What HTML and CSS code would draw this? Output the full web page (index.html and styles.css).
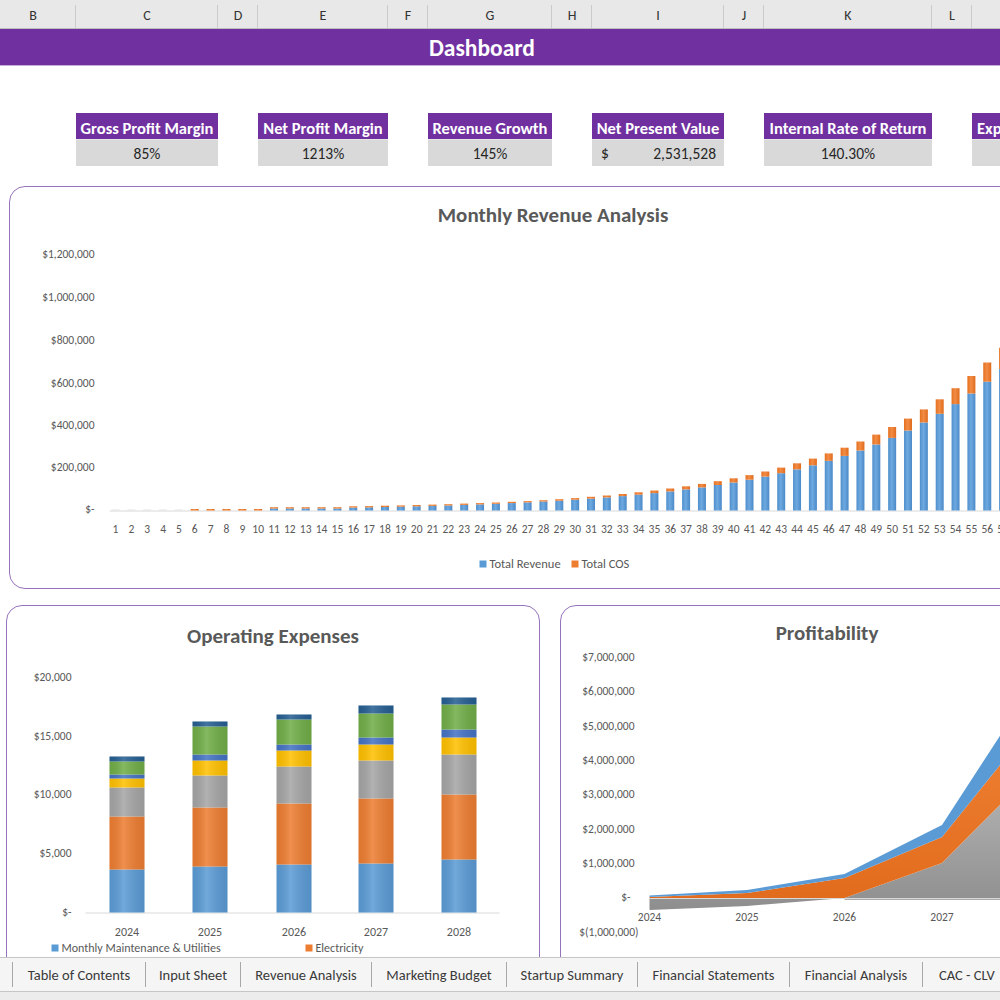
FILE: index.html
```html
<!DOCTYPE html>
<html>
<head>
<meta charset="utf-8">
<title>Dashboard</title>
<link rel="stylesheet" href="styles.css">
</head>
<body>
<div class="colhead">
  <span>B</span><span>C</span><span>D</span><span>E</span><span>F</span><span>G</span><span>H</span><span>I</span><span>J</span><span>K</span><span>L</span><span></span>
</div>
<div class="titlebar"><h1>Dashboard</h1></div>

<div class="kpis">
  <div class="kpi k1"><div class="kpi-h">Gross Profit Margin</div><div class="kpi-v">85%</div></div>
  <div class="kpi k2"><div class="kpi-h">Net Profit Margin</div><div class="kpi-v">1213%</div></div>
  <div class="kpi k3"><div class="kpi-h">Revenue Growth</div><div class="kpi-v">145%</div></div>
  <div class="kpi k4"><div class="kpi-h">Net Present Value</div><div class="kpi-v split"><span>$</span><span>2,531,528</span></div></div>
  <div class="kpi k5"><div class="kpi-h">Internal Rate of Return</div><div class="kpi-v">140.30%</div></div>
  <div class="kpi k6"><div class="kpi-h left">Exp</div><div class="kpi-v"></div></div>
</div>

<section class="card card-wide">
  <h2 class="chart-title t-rev">Monthly Revenue Analysis</h2>
  <svg class="chart" width="1097" height="348" viewBox="10.5 239.5 1097 348">
    <defs>
      <linearGradient id="gb" x1="0" y1="0" x2="1" y2="0">
        <stop offset="0" stop-color="#4f8fcc"/><stop offset="0.45" stop-color="#6ea9e0"/><stop offset="1" stop-color="#4a89c8"/>
      </linearGradient>
      <linearGradient id="go" x1="0" y1="0" x2="1" y2="0">
        <stop offset="0" stop-color="#e4701f"/><stop offset="0.45" stop-color="#f28c45"/><stop offset="1" stop-color="#e06b1c"/>
      </linearGradient>
    </defs>
    <g class="ylab" text-anchor="end">
      <text x="95" y="258">$1,200,000</text>
      <text x="95" y="301">$1,000,000</text>
      <text x="95" y="344">$800,000</text>
      <text x="95" y="387">$600,000</text>
      <text x="95" y="429">$400,000</text>
      <text x="95" y="471">$200,000</text>
      <text x="95" y="513">$-</text>
    </g>
    <line x1="110" y1="511.5" x2="1110" y2="511.5" stroke="#d9d9d9" stroke-width="1"/>
    <g fill="#e4e4e4">
      <rect x="112" y="510" width="8" height="1"/><rect x="127.85" y="510" width="8" height="1"/><rect x="143.7" y="510" width="8" height="1"/><rect x="159.55" y="510" width="8" height="1"/><rect x="175.4" y="510" width="8" height="1"/>
    </g>
    <g fill="url(#gb)">
      <rect x="270.5" y="509" width="8" height="2"/>
      <rect x="286.35" y="509" width="8" height="2"/>
      <rect x="302.2" y="509" width="8" height="2"/>
      <rect x="318.05" y="509" width="8" height="2"/>
      <rect x="333.9" y="509" width="8" height="2"/>
      <rect x="349.75" y="508.1" width="8" height="2.9"/>
      <rect x="365.6" y="507.9" width="8" height="3.1"/>
      <rect x="381.45" y="507.5" width="8" height="3.5"/>
      <rect x="397.3" y="507.2" width="8" height="3.8"/>
      <rect x="413.15" y="506.8" width="8" height="4.2"/>
      <rect x="429" y="506.4" width="8" height="4.6"/>
      <rect x="444.85" y="506" width="8" height="5"/>
      <rect x="460.7" y="505.4" width="8" height="5.6"/>
      <rect x="476.55" y="504.9" width="8" height="6.1"/>
      <rect x="492.4" y="504.3" width="8" height="6.7"/>
      <rect x="508.25" y="503.6" width="8" height="7.4"/>
      <rect x="524.1" y="502.9" width="8" height="8.1"/>
      <rect x="539.95" y="502" width="8" height="9"/>
      <rect x="555.8" y="501.2" width="8" height="9.8"/>
      <rect x="571.65" y="500.2" width="8" height="10.8"/>
      <rect x="587.5" y="499.1" width="8" height="11.9"/>
      <rect x="603.35" y="497.9" width="8" height="13.1"/>
      <rect x="619.2" y="496.6" width="8" height="14.4"/>
      <rect x="635.05" y="495.2" width="8" height="15.8"/>
      <rect x="650.9" y="493.6" width="8" height="17.4"/>
      <rect x="666.75" y="491.9" width="8" height="19.1"/>
      <rect x="682.6" y="489.9" width="8" height="21.1"/>
      <rect x="698.45" y="487.9" width="8" height="23.1"/>
      <rect x="714.3" y="485.5" width="8" height="25.5"/>
      <rect x="730.15" y="483" width="8" height="28"/>
      <rect x="746" y="480.2" width="8" height="30.8"/>
      <rect x="761.85" y="477.1" width="8" height="33.9"/>
      <rect x="777.7" y="473.7" width="8" height="37.3"/>
      <rect x="793.55" y="469.9" width="8" height="41.1"/>
      <rect x="809.4" y="465.8" width="8" height="45.2"/>
      <rect x="825.25" y="461.3" width="8" height="49.7"/>
      <rect x="841.1" y="456.4" width="8" height="54.6"/>
      <rect x="856.95" y="451" width="8" height="60"/>
      <rect x="872.8" y="445" width="8" height="66"/>
      <rect x="888.65" y="438.4" width="8" height="72.6"/>
      <rect x="904.5" y="431" width="8" height="80"/>
      <rect x="920.35" y="423" width="8" height="88"/>
      <rect x="936.2" y="414.3" width="8" height="96.7"/>
      <rect x="952.05" y="404.6" width="8" height="106.4"/>
      <rect x="967.9" y="394" width="8" height="117"/>
      <rect x="983.75" y="382.2" width="8" height="128.8"/>
      <rect x="999.6" y="369.4" width="8" height="141.6"/>
    </g>
    <g fill="url(#go)">
      <rect x="191.25" y="509.5" width="8" height="1.5"/>
      <rect x="207.1" y="509.5" width="8" height="1.5"/>
      <rect x="222.95" y="509.5" width="8" height="1.5"/>
      <rect x="238.8" y="509.5" width="8" height="1.5"/>
      <rect x="254.65" y="509.5" width="8" height="1.5"/>
      <rect x="270.5" y="507.7" width="8" height="1.3"/>
      <rect x="286.35" y="507.7" width="8" height="1.3"/>
      <rect x="302.2" y="507.7" width="8" height="1.3"/>
      <rect x="318.05" y="507.7" width="8" height="1.3"/>
      <rect x="333.9" y="507.7" width="8" height="1.3"/>
      <rect x="349.75" y="506.8" width="8" height="1.3"/>
      <rect x="365.6" y="506.6" width="8" height="1.3"/>
      <rect x="381.45" y="506.2" width="8" height="1.3"/>
      <rect x="397.3" y="505.9" width="8" height="1.3"/>
      <rect x="413.15" y="505.5" width="8" height="1.3"/>
      <rect x="429" y="505.1" width="8" height="1.3"/>
      <rect x="444.85" y="504.7" width="8" height="1.3"/>
      <rect x="460.7" y="504.1" width="8" height="1.3"/>
      <rect x="476.55" y="503.6" width="8" height="1.3"/>
      <rect x="492.4" y="503" width="8" height="1.3"/>
      <rect x="508.25" y="502.3" width="8" height="1.3"/>
      <rect x="524.1" y="501.6" width="8" height="1.3"/>
      <rect x="539.95" y="500.7" width="8" height="1.3"/>
      <rect x="555.8" y="499.7" width="8" height="1.5"/>
      <rect x="571.65" y="498.6" width="8" height="1.6"/>
      <rect x="587.5" y="497.3" width="8" height="1.8"/>
      <rect x="603.35" y="496" width="8" height="1.9"/>
      <rect x="619.2" y="494.5" width="8" height="2.1"/>
      <rect x="635.05" y="492.8" width="8" height="2.4"/>
      <rect x="650.9" y="491" width="8" height="2.6"/>
      <rect x="666.75" y="489" width="8" height="2.9"/>
      <rect x="682.6" y="486.8" width="8" height="3.1"/>
      <rect x="698.45" y="484.4" width="8" height="3.5"/>
      <rect x="714.3" y="481.7" width="8" height="3.8"/>
      <rect x="730.15" y="478.8" width="8" height="4.2"/>
      <rect x="746" y="475.6" width="8" height="4.6"/>
      <rect x="761.85" y="472" width="8" height="5.1"/>
      <rect x="777.7" y="468.1" width="8" height="5.6"/>
      <rect x="793.55" y="463.8" width="8" height="6.1"/>
      <rect x="809.4" y="459.1" width="8" height="6.7"/>
      <rect x="825.25" y="453.9" width="8" height="7.4"/>
      <rect x="841.1" y="448.2" width="8" height="8.2"/>
      <rect x="856.95" y="442" width="8" height="9"/>
      <rect x="872.8" y="435.1" width="8" height="9.9"/>
      <rect x="888.65" y="427.5" width="8" height="10.9"/>
      <rect x="904.5" y="419.1" width="8" height="11.9"/>
      <rect x="920.35" y="409.9" width="8" height="13.1"/>
      <rect x="936.2" y="399.8" width="8" height="14.5"/>
      <rect x="952.05" y="388.7" width="8" height="15.9"/>
      <rect x="967.9" y="376.5" width="8" height="17.5"/>
      <rect x="983.75" y="363" width="8" height="19.2"/>
      <rect x="999.6" y="348.2" width="8" height="21.2"/>
    </g>
    <g class="xlab" text-anchor="middle">
      <text x="116" y="533">1</text><text x="131.85" y="533">2</text><text x="147.7" y="533">3</text><text x="163.55" y="533">4</text><text x="179.4" y="533">5</text><text x="195.25" y="533">6</text><text x="211.1" y="533">7</text><text x="226.95" y="533">8</text><text x="242.8" y="533">9</text><text x="258.65" y="533">10</text>
      <text x="274.5" y="533">11</text><text x="290.35" y="533">12</text><text x="306.2" y="533">13</text><text x="322.05" y="533">14</text><text x="337.9" y="533">15</text><text x="353.75" y="533">16</text><text x="369.6" y="533">17</text><text x="385.45" y="533">18</text><text x="401.3" y="533">19</text><text x="417.15" y="533">20</text>
      <text x="433" y="533">21</text><text x="448.85" y="533">22</text><text x="464.7" y="533">23</text><text x="480.55" y="533">24</text><text x="496.4" y="533">25</text><text x="512.25" y="533">26</text><text x="528.1" y="533">27</text><text x="543.95" y="533">28</text><text x="559.8" y="533">29</text><text x="575.65" y="533">30</text>
      <text x="591.5" y="533">31</text><text x="607.35" y="533">32</text><text x="623.2" y="533">33</text><text x="639.05" y="533">34</text><text x="654.9" y="533">35</text><text x="670.75" y="533">36</text><text x="686.6" y="533">37</text><text x="702.45" y="533">38</text><text x="718.3" y="533">39</text><text x="734.15" y="533">40</text>
      <text x="750" y="533">41</text><text x="765.85" y="533">42</text><text x="781.7" y="533">43</text><text x="797.55" y="533">44</text><text x="813.4" y="533">45</text><text x="829.25" y="533">46</text><text x="845.1" y="533">47</text><text x="860.95" y="533">48</text><text x="876.8" y="533">49</text><text x="892.65" y="533">50</text>
      <text x="908.5" y="533">51</text><text x="924.35" y="533">52</text><text x="940.2" y="533">53</text><text x="956.05" y="533">54</text><text x="971.9" y="533">55</text><text x="987.75" y="533">56</text><text x="1003.6" y="533">57</text><text x="1019.45" y="533">58</text>
    </g>
    <g class="legend">
      <rect x="480" y="561" width="7" height="7" fill="#5b9bd5"/>
      <text x="490" y="568">Total Revenue</text>
      <rect x="572" y="561" width="7" height="7" fill="#ed7d31"/>
      <text x="582" y="568">Total COS</text>
    </g>
  </svg>
</section>

<div class="row">
  <section class="card card-half">
    <h2 class="chart-title t-op">Operating Expenses</h2>
    <svg class="chart" width="531" height="300" viewBox="7.5 655.5 531 300">
      <defs>
        <linearGradient id="shade" x1="0" y1="0" x2="1" y2="0">
          <stop offset="0" stop-color="#000" stop-opacity="0.06"/><stop offset="0.4" stop-color="#fff" stop-opacity="0.14"/><stop offset="1" stop-color="#000" stop-opacity="0.08"/>
        </linearGradient>
      </defs>
      <g class="ylab" text-anchor="end">
        <text x="72" y="681">$20,000</text>
        <text x="72" y="740">$15,000</text>
        <text x="72" y="798">$10,000</text>
        <text x="72" y="857">$5,000</text>
        <text x="72" y="916">$-</text>
      </g>
      <line x1="86" y1="913.5" x2="500" y2="913.5" stroke="#d9d9d9" stroke-width="1"/>
      <g>
        <rect x="110" y="870" width="35" height="43" fill="#5b9bd5"/>
        <rect x="110" y="817" width="35" height="53" fill="#ed7d31"/>
        <rect x="110" y="788" width="35" height="29" fill="#a5a5a5"/>
        <rect x="110" y="779" width="35" height="9" fill="#ffc000"/>
        <rect x="110" y="775" width="35" height="4" fill="#4472c4"/>
        <rect x="110" y="762" width="35" height="13" fill="#70ad47"/>
        <rect x="110" y="757" width="35" height="5" fill="#255e91"/>
        <rect x="110" y="757" width="35" height="156" fill="url(#shade)"/>
      </g>
      <g>
        <rect x="193" y="867" width="35" height="46" fill="#5b9bd5"/>
        <rect x="193" y="808" width="35" height="59" fill="#ed7d31"/>
        <rect x="193" y="776" width="35" height="32" fill="#a5a5a5"/>
        <rect x="193" y="761" width="35" height="15" fill="#ffc000"/>
        <rect x="193" y="755" width="35" height="6" fill="#4472c4"/>
        <rect x="193" y="727" width="35" height="28" fill="#70ad47"/>
        <rect x="193" y="722" width="35" height="5" fill="#255e91"/>
        <rect x="193" y="722" width="35" height="191" fill="url(#shade)"/>
      </g>
      <g>
        <rect x="277" y="865" width="35" height="48" fill="#5b9bd5"/>
        <rect x="277" y="804" width="35" height="61" fill="#ed7d31"/>
        <rect x="277" y="767" width="35" height="37" fill="#a5a5a5"/>
        <rect x="277" y="751" width="35" height="16" fill="#ffc000"/>
        <rect x="277" y="745" width="35" height="6" fill="#4472c4"/>
        <rect x="277" y="720" width="35" height="25" fill="#70ad47"/>
        <rect x="277" y="715" width="35" height="5" fill="#255e91"/>
        <rect x="277" y="715" width="35" height="198" fill="url(#shade)"/>
      </g>
      <g>
        <rect x="359" y="864" width="35" height="49" fill="#5b9bd5"/>
        <rect x="359" y="799" width="35" height="65" fill="#ed7d31"/>
        <rect x="359" y="761" width="35" height="38" fill="#a5a5a5"/>
        <rect x="359" y="745" width="35" height="16" fill="#ffc000"/>
        <rect x="359" y="738" width="35" height="7" fill="#4472c4"/>
        <rect x="359" y="714" width="35" height="24" fill="#70ad47"/>
        <rect x="359" y="706" width="35" height="8" fill="#255e91"/>
        <rect x="359" y="706" width="35" height="207" fill="url(#shade)"/>
      </g>
      <g>
        <rect x="442" y="860" width="35" height="53" fill="#5b9bd5"/>
        <rect x="442" y="795" width="35" height="65" fill="#ed7d31"/>
        <rect x="442" y="755" width="35" height="40" fill="#a5a5a5"/>
        <rect x="442" y="738" width="35" height="17" fill="#ffc000"/>
        <rect x="442" y="730" width="35" height="8" fill="#4472c4"/>
        <rect x="442" y="705" width="35" height="25" fill="#70ad47"/>
        <rect x="442" y="698" width="35" height="7" fill="#255e91"/>
        <rect x="442" y="698" width="35" height="215" fill="url(#shade)"/>
      </g>
      <g class="xlab big" text-anchor="middle">
        <text x="127.5" y="936">2024</text>
        <text x="210.5" y="936">2025</text>
        <text x="294.5" y="936">2026</text>
        <text x="376.5" y="936">2027</text>
        <text x="459.5" y="936">2028</text>
      </g>
      <g class="legend big">
        <rect x="52" y="945" width="7" height="7" fill="#5b9bd5"/>
        <text x="62" y="952">Monthly Maintenance &amp; Utilities</text>
        <rect x="306" y="945" width="7" height="7" fill="#ed7d31"/>
        <text x="316" y="952">Electricity</text>
      </g>
    </svg>
  </section>

  <section class="card card-half">
    <h2 class="chart-title t-pr">Profitability</h2>
    <svg class="chart" width="531" height="320" viewBox="561.5 645 531 320">
      <defs>
        <linearGradient id="gg" x1="0" y1="0" x2="0" y2="1">
          <stop offset="0" stop-color="#b9b9b9"/><stop offset="1" stop-color="#8e8e8e"/>
        </linearGradient>
        <linearGradient id="gor" x1="0" y1="0" x2="0" y2="1">
          <stop offset="0" stop-color="#f08236"/><stop offset="1" stop-color="#e26c1d"/>
        </linearGradient>
      </defs>
      <g class="ylab" text-anchor="end">
        <text x="635" y="661">$7,000,000</text>
        <text x="635" y="695">$6,000,000</text>
        <text x="635" y="730">$5,000,000</text>
        <text x="635" y="764">$4,000,000</text>
        <text x="635" y="798">$3,000,000</text>
        <text x="635" y="833">$2,000,000</text>
        <text x="635" y="867">$1,000,000</text>
        <text x="631" y="901">$-</text>
        <text x="639" y="936">$(1,000,000)</text>
      </g>
      <polygon points="650,910 747.5,906 845,898 942.5,863 1040,765 1040,898 650,898" fill="url(#gg)"/>
      <polygon points="650,897 747.5,893 845,878 942.5,837 1040,716 1040,765 942.5,863 845,898 747.5,898 650,898" fill="url(#gor)"/>
      <polygon points="650,895.5 747.5,890 845,874 942.5,825 1040,675 1040,716 942.5,837 845,878 747.5,893 650,897" fill="#5b9bd5"/>
      <line x1="650" y1="898.5" x2="1100" y2="898.5" stroke="#d9d9d9" stroke-width="1"/>
      <line x1="845" y1="899.5" x2="1100" y2="899.5" stroke="#555" stroke-width="1" stroke-opacity="0.5"/>
      <g class="xlab" text-anchor="middle">
        <text x="650" y="921">2024</text>
        <text x="747.5" y="921">2025</text>
        <text x="845" y="921">2026</text>
        <text x="942.5" y="921">2027</text>
      </g>
    </svg>
  </section>
</div>

<nav class="tabs">
  <span class="tab">Table of Contents</span>
  <span class="tab">Input Sheet</span>
  <span class="tab">Revenue Analysis</span>
  <span class="tab">Marketing Budget</span>
  <span class="tab">Startup Summary</span>
  <span class="tab">Financial Statements</span>
  <span class="tab">Financial Analysis</span>
  <span class="tab">CAC - CLV</span>
</nav>
<div class="statusfill"></div>
</body>
</html>
```

FILE: styles.css
```css
* { box-sizing: border-box; }

html, body {
  margin: 0;
  padding: 0;
}

body {
  width: 1000px;
  height: 1000px;
  overflow: hidden;
  background: #ffffff;
  font-family: Carlito, Lato, "Liberation Sans", sans-serif;
  color: #262626;
}

/* Spreadsheet column header */
.colhead {
  display: grid;
  grid-template-columns: 86px 142px 40px 130px 40px 124px 40px 132px 40px 168px 40px 200px;
  margin-left: -10px;
  width: 1210px;
  height: 29px;
  background: #e8e8e8;
  border-bottom: 1px solid #bdbdbd;
}

.colhead span {
  display: flex;
  align-items: center;
  justify-content: center;
  padding-top: 3px;
  font-size: 14px;
  color: #333333;
  background: linear-gradient(#cbcbcb, #cbcbcb) right 5px / 1px 23px no-repeat;
}

/* Title bar */
.titlebar {
  height: 37px;
  background: #7030a0;
  border-bottom: 1px solid #c2aed6;
  display: flex;
  align-items: center;
  justify-content: center;
  padding: 2px 36px 0 0;
}

.titlebar h1 {
  margin: 0;
  font-size: 23.5px;
  font-weight: 700;
  color: #ffffff;
}

/* KPI tiles */
.kpis {
  display: grid;
  grid-template-columns: 76px 142px 40px 130px 40px 124px 40px 132px 40px 168px 40px 200px;
  width: 1172px;
  margin-top: 47px;
}

.k1 { grid-column: 2; }
.k2 { grid-column: 4; }
.k3 { grid-column: 6; }
.k4 { grid-column: 8; }
.k5 { grid-column: 10; }
.k6 { grid-column: 12; }

.kpi-h {
  height: 26px;
  padding-top: 3px;
  background: #7030a0;
  color: #ffffff;
  font-weight: 700;
  font-size: 16.5px;
  display: flex;
  align-items: center;
  justify-content: center;
  white-space: nowrap;
  overflow: hidden;
}

.kpi-h.left {
  justify-content: flex-start;
  padding-left: 5px;
}

.kpi-v {
  height: 27px;
  background: #d9d9d9;
  border-top: 1px solid #e6e6e6;
  font-size: 15.5px;
  color: #262626;
  display: flex;
  align-items: center;
  justify-content: center;
}

.kpi-v.split {
  justify-content: space-between;
  padding: 0 8px 0 9px;
}

/* Chart cards */
.card {
  border: 1.5px solid #9673bb;
  border-radius: 16px;
  overflow: hidden;
  background: #ffffff;
  flex: none;
}

.card-wide {
  width: 1100px;
  height: 403px;
  margin: 20px 0 0 9px;
}

.chart-title {
  margin: 0;
  text-align: center;
  font-weight: 700;
  font-size: 21px;
  line-height: 24px;
  color: #595959;
}

.t-rev {
  padding: 16px 12px 12px 0;
  height: 52px;
}

.t-op {
  padding-top: 17.5px;
  height: 49px;
}

.t-pr {
  padding-top: 14.5px;
  height: 38.5px;
}

.chart {
  display: block;
}

.chart text {
  font-family: Carlito, Lato, "Liberation Sans", sans-serif;
}

.ylab text,
.xlab text {
  font-size: 11.5px;
  fill: #595959;
}

.xlab.big text {
  font-size: 12px;
}

.legend text {
  font-size: 12.5px;
  fill: #595959;
}

.legend.big text {
  font-size: 12px;
}

.row {
  display: flex;
  gap: 20px;
  padding-left: 6px;
  margin-top: 16px;
  height: 352px;
  overflow: hidden;
}

.card-half {
  width: 534px;
  height: 400px;
}

/* Sheet tabs */
.tabs {
  display: grid;
  grid-template-columns: 133px 95px 131px 135px 131px 152px 133px 120px;
  padding-left: 12px;
  height: 35px;
  background: #f5f5f5;
  border-top: 1px solid #c6c6c6;
  border-bottom: 1px solid #c6c6c6;
  width: 1050px;
}

.tab {
  margin: 4px 0;
  border-left: 1px solid #a8a8a8;
  display: flex;
  align-items: center;
  justify-content: center;
  font-size: 14.5px;
  color: #3a3a3a;
  white-space: nowrap;
}

.tab:last-child {
  justify-content: flex-start;
  padding-left: 16px;
}

.statusfill {
  height: 8px;
  background: #ececec;
}
```
